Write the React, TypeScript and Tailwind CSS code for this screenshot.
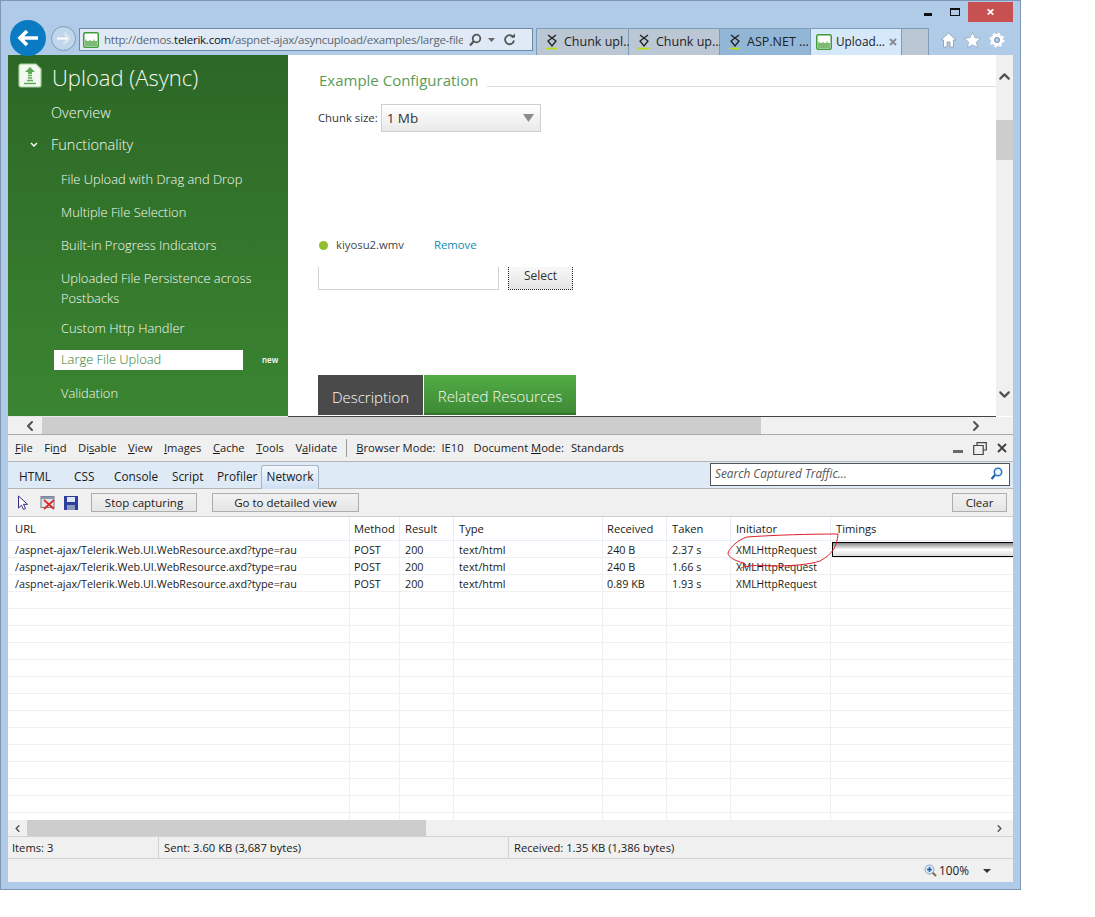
import React from "react";
import { ChevronLeft, ChevronRight, ChevronUp, ChevronDown } from "lucide-react";

const rows = [
  ["/aspnet-ajax/Telerik.Web.UI.WebResource.axd?type=rau", "POST", "200", "text/html", "240 B", "2.37 s", "XMLHttpRequest"],
  ["/aspnet-ajax/Telerik.Web.UI.WebResource.axd?type=rau", "POST", "200", "text/html", "240 B", "1.66 s", "XMLHttpRequest"],
  ["/aspnet-ajax/Telerik.Web.UI.WebResource.axd?type=rau", "POST", "200", "text/html", "0.89 KB", "1.93 s", "XMLHttpRequest"],
  ...Array.from({ length: 14 }, () => ["", "", "", "", "", "", ""]),
];

function Hourglass() {
  return (
    <svg width="14" height="16" viewBox="0 0 14 16" className="shrink-0">
      <path d="M3 1l8 6M11 1L3 7M3 7l4 5 4-5L7 4z" fill="none" stroke="#222" strokeWidth="1.3" />
      <path d="M1 14.5h11" stroke="#b8e000" strokeWidth="1.6" />
    </svg>
  );
}

function GreenFav({ size = 16 }: { size?: number }) {
  return (
    <svg width={size} height={size} viewBox="0 0 16 16" className="shrink-0">
      <rect x="0.75" y="0.75" width="14.5" height="14.5" rx="1.5" fill="#fff" stroke="#3f9a3a" strokeWidth="1.5" />
      <rect x="2" y="9" width="12" height="5" fill="#7dba74" />
      <path d="M3 9V7.5M7 9V8M11 9V7.5" stroke="#7dba74" strokeWidth="1.3" />
    </svg>
  );
}

function Tab({ label, bg, fav }: { label: string; bg: string; fav: React.ReactNode }) {
  return (
    <div className={`flex h-full items-center gap-[5px] border-r border-[#7f9db9] pl-[8px] ${bg}`}>
      {fav}
      <span className="whitespace-nowrap text-[12.5px] text-[#222]">{label}</span>
    </div>
  );
}

function NavItem({ label, h, indent = "pl-[53px]" }: { label: string; h: string; indent?: string }) {
  return (
    <div className={`flex items-center text-[12.9px] font-light leading-[20px] text-[#f6faf5] ${h} ${indent}`}>{label}</div>
  );
}

function Menu({ a, u, b }: { a?: string; u: string; b?: string }) {
  return (
    <span className="whitespace-nowrap">
      {a}
      <u>{u}</u>
      {b}
    </span>
  );
}

function ToolBtn({ label, w }: { label: string; w: string }) {
  return (
    <div className={`flex h-[19px] items-center justify-center border border-[#adadad] bg-gradient-to-b from-[#f2f2f2] to-[#e5e5e5] text-[11.5px] text-[#1a1a1a] ${w}`}>
      {label}
    </div>
  );
}

const cols = ["w-[342px] pl-[7px]", "w-[50px] pl-[4px]", "w-[54px] pl-[5px]", "w-[149px] pl-[5px]", "w-[64px] pl-[4px]", "w-[64px] pl-[5px]", "w-[100px] pl-[5px]", "w-[182px] pl-[5px]"];

export default function App() {
  return (
    <div className="h-[917px] w-[1095px] overflow-hidden bg-white" style={{ fontFamily: '"Open Sans","Noto Sans",sans-serif' }}>
      <div className="flex h-[890px] w-[1021px] flex-col border border-[#7f97b3] bg-[#afcbe7] pb-[7px] pl-[7px] pr-[7px]">
        {/* browser chrome */}
        <div className="relative h-[54px] shrink-0">
          <div className="flex h-full items-end">
            <div className="mb-[-1px] ml-[2px] flex h-[36px] w-[36px] shrink-0 items-center justify-center rounded-full bg-[#0a7bc2]">
              <svg width="22" height="18" viewBox="0 0 22 18"><path d="M10 2L3 9l7 7M3 9h18" fill="none" stroke="#fff" strokeWidth="3.6" /></svg>
            </div>
            <div className="mb-[4px] ml-[5px] flex h-[25px] w-[25px] shrink-0 items-center justify-center rounded-full border border-[#8099b5] bg-[#c0d6ec]">
              <svg width="15" height="13" viewBox="0 0 15 13"><path d="M8 1l5 5.5L8 12M13 6.500H1" fill="none" stroke="#fff" strokeWidth="2" /><path d="M8 1l5 5.500L8 12" fill="none" stroke="#8aa0b8" strokeWidth="0.6" /></svg>
            </div>
            <div className="mb-[4px] ml-[3px] flex h-[23px] w-[454px] shrink-0 items-center border border-[#6f8aa6] bg-[#dfeaf6] pl-[3px] pr-[4px]">
              <GreenFav size={16} />
              <span className="ml-[5px] w-[359px] overflow-hidden whitespace-nowrap text-[11.5px] tracking-[-0.25px] text-[#5c6670]">
                http://demos.<span className="text-[#111]">telerik.com</span>/aspnet-ajax/asyncupload/examples/large-file
              </span>
              <svg width="14" height="14" viewBox="0 0 14 14" className="ml-[5px]"><circle cx="8.500" cy="5.500" r="3.800" fill="none" stroke="#555" strokeWidth="1.800" /><path d="M6 8l-4 4.500" stroke="#555" strokeWidth="2.200" /></svg>
              <svg width="7" height="4" viewBox="0 0 7 4" className="ml-[6px]"><path d="M0 0h7L3.500 4z" fill="#666" /></svg>
              <svg width="13" height="13" viewBox="0 0 13 13" className="ml-[8px]"><path d="M10.500 4.500A4.500 4.500 0 1 0 11 7.500" fill="none" stroke="#555" strokeWidth="1.800" /><path d="M8 4.500h4V.500z" fill="#555" /></svg>
            </div>
            <div className="mb-0 ml-[3px] flex h-[27px] shrink-0 border-l border-t border-[#7f9db9]">
              <div className="w-[92px]"><Tab label="Chunk upl..." bg="bg-[#bcc7d5]" fav={<Hourglass />} /></div>
              <div className="w-[91px]"><Tab label="Chunk up..." bg="bg-[#bcc7d5]" fav={<Hourglass />} /></div>
              <div className="w-[91px]"><Tab label="ASP.NET ..." bg="bg-[#92b6d6]" fav={<Hourglass />} /></div>
              <div className="flex w-[91px] items-center border-r border-[#7f9db9] bg-[#d6e9fa] pl-[5px]">
                <GreenFav size={16} />
                <span className="ml-[4px] whitespace-nowrap text-[11.8px] text-[#222]">Upload...</span>
                <svg width="8" height="8" viewBox="0 0 8 8" className="ml-[4px] shrink-0"><path d="M1 1l6 6M7 1L1 7" stroke="#8a8f96" strokeWidth="2" /></svg>
              </div>
              <div className="w-[27px] border-r border-[#7f9db9] bg-[#bcc7d5]" />
            </div>
            <div className="mb-[7px] ml-[11px] flex items-center gap-[7px]">
              <svg width="17" height="16" viewBox="0 0 17 16"><path d="M8.500 1L1 8h2.500v7h3.500v-5h3v5h3.500V8H16z" fill="#fff" stroke="#7a8ea5" strokeWidth="0.700" /></svg>
              <svg width="17" height="16" viewBox="0 0 17 16"><path d="M8.500 .500l2.400 5.200 5.600.6-4.200 3.800 1.200 5.500-5-2.900-5 2.900 1.200-5.500L.5 6.300l5.600-.6z" fill="#fff" stroke="#7a8ea5" strokeWidth="0.500" /></svg>
              <svg width="16" height="16" viewBox="0 0 16 16" className="ml-px"><circle cx="8" cy="8" r="4.500" fill="none" stroke="#fff" strokeWidth="3" /><circle cx="8" cy="8" r="6.200" fill="none" stroke="#fff" strokeWidth="2.400" strokeDasharray="2.300 2.560" /><circle cx="8" cy="8" r="2.600" fill="none" stroke="#6d8299" strokeWidth="0.700" /></svg>
            </div>
          </div>
          {/* window controls */}
          <div className="absolute right-0 top-0 flex h-[21px] items-center">
            <div className="mt-[5px] h-[3px] w-[8px] bg-[#111]" />
            <div className="ml-[18px] h-[8px] w-[10px] border-[1.500px] border-t-[2.500px] border-[#111]" />
            <div className="ml-[8px] flex h-[20px] w-[45px] items-center justify-center bg-[#c75050] text-[15px] font-bold leading-none text-white">×</div>
          </div>
        </div>

        {/* page */}
        <div className="flex h-[362px] shrink-0 flex-col overflow-hidden bg-white">
          <div className="flex h-[361px] shrink-0">
            <div className="h-full w-[280px] shrink-0 bg-gradient-to-b from-[#2d6726] to-[#3a8531] pt-[3px]">
              <div className="flex h-[35px] items-center pl-[10px]">
                <svg width="24" height="25" viewBox="0 0 24 25" className="shrink-0">
                  <path d="M3 1h15l5 5v16a2 2 0 0 1-2 2H3a2 2 0 0 1-2-2V3a2 2 0 0 1 2-2z" fill="#f2faf0" stroke="#a5d09c" strokeWidth="1.200" />
                  <path d="M12 4l5 5h-3v2h-4V9H7z" fill="#5fa855" />
                  <path d="M10 12.500h4M10 15h4M9 17.500h6M6 20.500h12" stroke="#5fa855" strokeWidth="1.500" />
                </svg>
                <span className="ml-[10px] whitespace-nowrap pt-[2px] text-[22px] font-light leading-[28px] text-[#f6faf5]">Upload (Async)</span>
              </div>
              <div className="mt-[2px] flex h-[35px] items-center pl-[43px] text-[14.5px] font-light text-[#f6faf5]">Overview</div>
              <div className="flex h-[30px] items-center text-[14.5px] font-light text-[#f6faf5]">
                <svg width="8" height="6" viewBox="0 0 8 6" className="ml-[22px]"><path d="M1 1l3 3 3-3" fill="none" stroke="#fff" strokeWidth="1.400" /></svg>
                <span className="ml-[13px]">Functionality</span>
              </div>
              <NavItem label="File Upload with Drag and Drop" h="h-[33px] mt-[2px]" />
              <NavItem label="Multiple File Selection" h="h-[33px]" />
              <NavItem label="Built-in Progress Indicators" h="h-[33px]" />
              <NavItem label={"Uploaded File Persistence across"} h="h-[20px] mt-[7px]" />
              <NavItem label="Postbacks" h="h-[20px]" />
              <NavItem label="Custom Http Handler" h="h-[33px] mt-[3px]" />
              <div className="mt-[6px] flex h-[20px] items-center">
                <div className="ml-[46px] flex h-[20px] w-[189px] items-center bg-white pl-[7px] text-[12.9px] font-light text-[#2f7a28]">Large File Upload</div>
                <span className="ml-[19px] text-[8px] font-semibold text-white">new</span>
              </div>
              <NavItem label="Validation" h="h-[33px] mt-[6px]" />
            </div>

            <div className="flex min-w-0 flex-1 flex-col pl-[30px]">
              <div className="mt-[15px] flex h-[20px] items-end pl-px">
                <span className="text-[15px] leading-[20px] text-[#5c9c56]">Example Configuration</span>
                <div className="mb-[3px] ml-[9px] h-px flex-1 bg-[#dddddd]" />
              </div>
              <div className="mt-[14px] flex h-[28px] items-center">
                <span className="text-[11.3px] text-[#333]">Chunk size:</span>
                <div className="ml-[3px] flex h-[28px] w-[160px] items-center justify-between border border-[#cfcfcf] bg-gradient-to-b from-[#ffffff] to-[#e9e9e9] pl-[5px] pr-[6px] text-[13.5px] text-[#333]">
                  1 Mb
                  <svg width="11" height="8" viewBox="0 0 11 8"><path d="M0 0h11L5.500 8z" fill="#8c8c8c" /></svg>
                </div>
              </div>
              <div className="ml-px mt-[105px] flex h-[16px] items-center text-[11.300px] text-[#444]">
                <span className="h-[9px] w-[9px] rounded-full bg-[#93bf2f]" />
                <span className="ml-[8px] w-[98px]">kiyosu2.wmv</span>
                <span className="text-[#0d8bb0]">Remove</span>
              </div>
              <div className="mt-[14px] flex h-[23px] items-stretch">
                <div className="w-[181px] border-x border-b border-[#d3d3d3]" />
                <div className="ml-[9px] flex w-[65px] items-center justify-center border-x border-b border-dotted border-[#222] bg-gradient-to-b from-[#f8f8f8] to-[#e4e4e4] pb-[5px] text-[12px] text-[#333]">Select</div>
              </div>
              <div className="mt-[85px] flex h-[40px] items-stretch text-[15px] font-light text-[#fafafa]">
                <div className="flex w-[105px] items-center justify-center bg-[#4a4a4a] pt-[4px]">Description</div>
                <div className="ml-px flex w-[152px] items-center justify-center border-b-[2px] border-[#2f7428] bg-gradient-to-b from-[#52ac45] to-[#3e8a35] pt-[4px]">Related Resources</div>
              </div>
            </div>

            <div className="flex h-full w-[17px] shrink-0 flex-col items-center bg-[#f0f0f0]">
              <ChevronUp size={17} strokeWidth={3} color="#505050" className="mt-[13px] shrink-0" />
              <div className="mt-[35px] h-[40px] w-full shrink-0 bg-[#cdcdcd]" />
              <ChevronDown size={17} strokeWidth={3} color="#505050" className="mt-[226px] shrink-0" />
            </div>
          </div>
          <div className="flex h-px shrink-0">
            <div className="w-[280px] bg-[#e8e8e8]" />
            <div className="w-[708px] bg-[#444]" />
          </div>
        </div>

        {/* page h-scroll */}
        <div className="flex h-[17px] shrink-0 items-center bg-[#f0f0f0]">
          <ChevronLeft size={16} strokeWidth={3} color="#505050" className="ml-[14px] shrink-0" />
          <div className="ml-[4px] h-full w-[719px] bg-[#cdcdcd]" />
          <ChevronRight size={16} strokeWidth={3} color="#505050" className="ml-[207px] shrink-0" />
        </div>

        {/* dev tools */}
        <div className="relative flex min-h-0 flex-1 flex-col border-t border-[#a9a9a9] bg-[#f0f0f0] text-[11.2px] text-[#1a1a1a]">
          <div className="flex h-[26px] shrink-0 items-center pl-[7px] pr-[6px]">
            <div className="flex items-center gap-[11.5px]">
              <Menu u="F" b="ile" />
              <Menu a="Fi" u="n" b="d" />
              <Menu a="Di" u="s" b="able" />
              <Menu u="V" b="iew" />
              <Menu u="I" b="mages" />
              <Menu u="C" b="ache" />
              <Menu u="T" b="ools" />
              <Menu a="V" u="a" b="lidate" />
            </div>
            <div className="mx-[9px] h-[18px] w-px bg-[#9a9a9a]" />
            <Menu u="B" b="rowser Mode:" />
            <span className="ml-[6px]">IE10</span>
            <span className="ml-[10px]"><Menu a="Document " u="M" b="ode:" /></span>
            <span className="ml-[7px]">Standards</span>
            <div className="ml-auto flex items-center gap-[10px]">
              <div className="mt-[6px] h-[3px] w-[10px] bg-[#6a6a6a]" />
              <svg width="14" height="13" viewBox="0 0 14 13"><path d="M4 3V.700h9.300V8H10.500M.7 3.500h9.500v9H.7z" fill="none" stroke="#444" strokeWidth="1.200" /></svg>
              <svg width="10" height="10" viewBox="0 0 10 10"><path d="M1 1l8 8M9 1l-8 8" stroke="#444" strokeWidth="2" /></svg>
            </div>
          </div>
          <div className="flex h-[28px] shrink-0 items-end border-y border-[#b5b5b5] bg-[#dfeaf7] pl-[11px] text-[11.8px]">
            <div className="mb-[2px] flex w-[55px]">HTML</div>
            <div className="mb-[2px] flex w-[40px]">CSS</div>
            <div className="mb-[2px] flex w-[58px]">Console</div>
            <div className="mb-[2px] flex w-[45px]">Script</div>
            <div className="mb-[2px] flex w-[44px]">Profiler</div>
            <div className="mb-[-1px] flex h-[24px] w-[58px] items-center justify-center rounded-t-[3px] border border-b-0 border-[#a9b4c2] bg-gradient-to-b from-[#f3f7fc] to-[#cfe0f4] pb-px">Network</div>
            <div className="mb-[2px] ml-auto mr-[3px] flex h-[23px] w-[300px] items-center justify-between border border-[#555] bg-white pb-[2px] pl-[4px] pr-[6px] italic text-[#555]">
              Search Captured Traffic...
              <svg width="13" height="13" viewBox="0 0 13 13"><circle cx="8" cy="5" r="3.700" fill="#eef6ff" stroke="#2a76c6" strokeWidth="1.600" /><path d="M5 8l-3.500 4" stroke="#1d5d9e" strokeWidth="2" /></svg>
            </div>
          </div>
          <div className="flex h-[28px] shrink-0 items-center border-b border-[#cfcfcf] pl-[9px] pr-[6px]">
            <svg width="13" height="16" viewBox="0 0 13 16"><path d="M1.500 1v12l3-2.800 2 4.300 2-1-2-4.200h4z" fill="#fff" stroke="#3b2a80" strokeWidth="1" /></svg>
            <svg width="16" height="15" viewBox="0 0 16 15" className="ml-[10px]"><rect x="1" y="1.500" width="13" height="11" fill="#dfe6ee" stroke="#778" /><rect x="1" y="1.500" width="13" height="2.500" fill="#8796a8" /><path d="M4 5l10 9M14 5L4 14" stroke="#e0281e" strokeWidth="1.700" /></svg>
            <svg width="14" height="14" viewBox="0 0 14 14" className="ml-[8px]"><rect width="14" height="14" fill="#2c3f9c" /><rect x="3" y="1" width="8" height="5" fill="#dfe6f5" /><rect x="3" y="9" width="8" height="5" fill="#8d96c0" /></svg>
            <div className="ml-[13px]"><ToolBtn label="Stop capturing" w="w-[106px]" /></div>
            <div className="ml-[15px]"><ToolBtn label="Go to detailed view" w="w-[147px]" /></div>
            <div className="ml-auto"><ToolBtn label="Clear" w="w-[55px]" /></div>
          </div>

          <div className="h-[303px] shrink-0 overflow-hidden bg-white text-[10.8px]">
            <div className="flex h-[24px] border-b border-[#e6edf6] bg-white text-[11.2px]">
              {["URL", "Method", "Result", "Type", "Received", "Taken", "Initiator", "Timings"].map((h, i) => (
                <div key={h} className={`flex items-center border-r border-[#e6edf6] pt-[2px] ${cols[i]}`}>{h}</div>
              ))}
            </div>
            {rows.map((r, ri) => (
              <div key={ri} className="flex h-[17px] border-b border-[#f0f0f0]">
                {r.map((c, ci) => (
                  <div key={ci} className={`flex items-center whitespace-nowrap border-r border-[#f0f0f0] pt-[3px] ${cols[ci]} ${ci === 6 ? "text-[10.3px]" : ""}`}>{c}</div>
                ))}
                <div className={`flex items-center ${cols[7]}`} />
              </div>
            ))}
          </div>

          {/* timing bar and hand-drawn annotation lie over the table */}
          <div className="absolute left-[824px] top-[107px] h-[15px] w-[181px] border-y border-l border-black bg-gradient-to-b from-[#888] via-[#fff] to-[#ddd]" />
          <svg className="pointer-events-none absolute left-0 top-0" width="1005" height="160" viewBox="8 434 1005 160">
            <path d="M838 533C810 533 775 534 747 536C738 539 730 546 728 552C728 556 735 560 744 562C748 565 745 566 741 567M838 533C837 545 833 553 820 560C808 564 790 565 770 565C760 564 752 564 745 566" fill="none" stroke="#e0202c" strokeWidth="1" />
          </svg>

          <div className="flex h-[16px] shrink-0 items-center bg-[#f0f0f0]">
            <ChevronLeft size={11} strokeWidth={3} color="#505050" className="ml-[4px] shrink-0" />
            <div className="ml-[4px] h-full w-[399px] bg-[#cdcdcd]" />
            <ChevronRight size={11} strokeWidth={3} color="#505050" className="ml-[568px] shrink-0" />
          </div>
          <div className="flex h-[23px] shrink-0 items-center border-y border-[#d2d2d2]">
            <div className="flex h-full w-[151px] items-center border-r border-[#d2d2d2] pl-[4px] pt-[2px]">Items: 3</div>
            <div className="flex h-full w-[350px] items-center border-r border-[#d2d2d2] pl-[5px] pt-[2px]">Sent: 3.60 KB (3,687 bytes)</div>
            <div className="flex h-full items-center pl-[5px] pt-[2px]">Received: 1.35 KB (1,386 bytes)</div>
          </div>
          <div className="flex flex-1 items-center justify-end pr-[22px] text-[11.8px]">
            <svg width="13" height="13" viewBox="0 0 13 13"><path d="M8 8l4 4" stroke="#8a6a3a" strokeWidth="2" /><circle cx="5.500" cy="5.500" r="4.500" fill="#dbe8f5" stroke="#8aa4c0" /><path d="M3 5.500h5M5.500 3v5" stroke="#1d5fb0" strokeWidth="1.600" /></svg>
            <span className="ml-[2px]">100%</span>
            <svg width="8" height="4" viewBox="0 0 8 4" className="ml-[14px]"><path d="M0 0h8L4 4z" fill="#333" /></svg>
          </div>
        </div>
      </div>
    </div>
  );
}
